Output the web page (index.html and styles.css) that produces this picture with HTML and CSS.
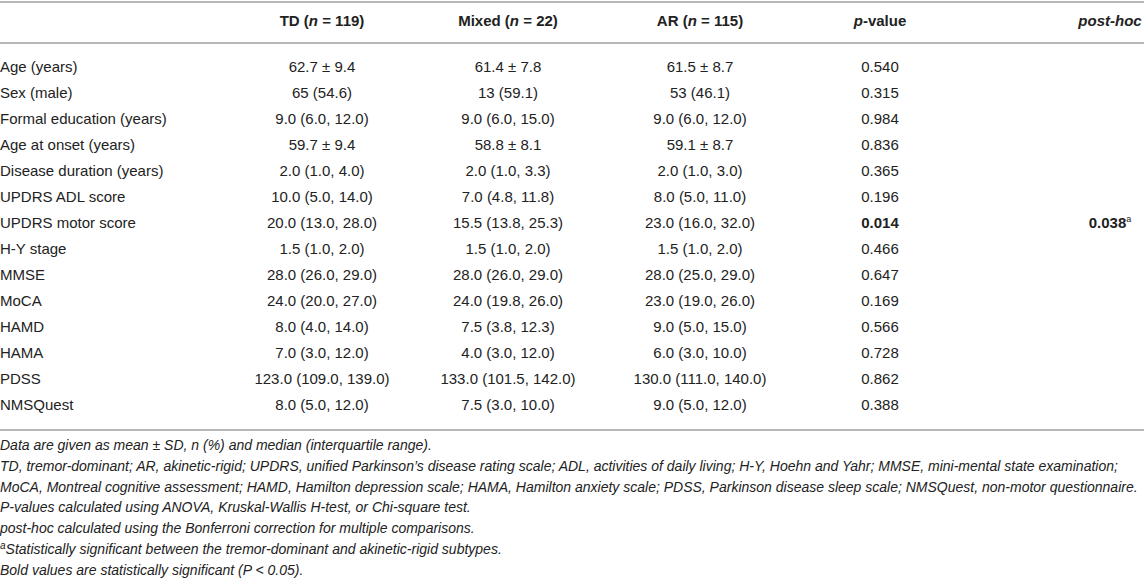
FILE: index.html
```html
<!DOCTYPE html>
<html>
<head>
<meta charset="utf-8">
<link rel="stylesheet" href="styles.css">
</head>
<body>
<div class="page">
  <div class="table">
    <div class="row head">
      <div class="c lab"></div>
      <div class="c">TD (<i>n</i> = 119)</div>
      <div class="c">Mixed (<i>n</i> = 22)</div>
      <div class="c">AR (<i>n</i> = 115)</div>
      <div class="c"><i>p</i>-value</div>
      <div class="c last"><i>post-hoc</i></div>
    </div>
    <div class="body">
      <div class="row"><div class="c lab">Age (years)</div><div class="c">62.7 ± 9.4</div><div class="c">61.4 ± 7.8</div><div class="c">61.5 ± 8.7</div><div class="c">0.540</div><div class="c last"></div></div>
      <div class="row"><div class="c lab">Sex (male)</div><div class="c">65 (54.6)</div><div class="c">13 (59.1)</div><div class="c">53 (46.1)</div><div class="c">0.315</div><div class="c last"></div></div>
      <div class="row"><div class="c lab">Formal education (years)</div><div class="c">9.0 (6.0, 12.0)</div><div class="c">9.0 (6.0, 15.0)</div><div class="c">9.0 (6.0, 12.0)</div><div class="c">0.984</div><div class="c last"></div></div>
      <div class="row"><div class="c lab">Age at onset (years)</div><div class="c">59.7 ± 9.4</div><div class="c">58.8 ± 8.1</div><div class="c">59.1 ± 8.7</div><div class="c">0.836</div><div class="c last"></div></div>
      <div class="row"><div class="c lab">Disease duration (years)</div><div class="c">2.0 (1.0, 4.0)</div><div class="c">2.0 (1.0, 3.3)</div><div class="c">2.0 (1.0, 3.0)</div><div class="c">0.365</div><div class="c last"></div></div>
      <div class="row"><div class="c lab">UPDRS ADL score</div><div class="c">10.0 (5.0, 14.0)</div><div class="c">7.0 (4.8, 11.8)</div><div class="c">8.0 (5.0, 11.0)</div><div class="c">0.196</div><div class="c last"></div></div>
      <div class="row"><div class="c lab">UPDRS motor score</div><div class="c">20.0 (13.0, 28.0)</div><div class="c">15.5 (13.8, 25.3)</div><div class="c">23.0 (16.0, 32.0)</div><div class="c"><b>0.014</b></div><div class="c last"><b>0.038</b><sup>a</sup></div></div>
      <div class="row"><div class="c lab">H-Y stage</div><div class="c">1.5 (1.0, 2.0)</div><div class="c">1.5 (1.0, 2.0)</div><div class="c">1.5 (1.0, 2.0)</div><div class="c">0.466</div><div class="c last"></div></div>
      <div class="row"><div class="c lab">MMSE</div><div class="c">28.0 (26.0, 29.0)</div><div class="c">28.0 (26.0, 29.0)</div><div class="c">28.0 (25.0, 29.0)</div><div class="c">0.647</div><div class="c last"></div></div>
      <div class="row"><div class="c lab">MoCA</div><div class="c">24.0 (20.0, 27.0)</div><div class="c">24.0 (19.8, 26.0)</div><div class="c">23.0 (19.0, 26.0)</div><div class="c">0.169</div><div class="c last"></div></div>
      <div class="row"><div class="c lab">HAMD</div><div class="c">8.0 (4.0, 14.0)</div><div class="c">7.5 (3.8, 12.3)</div><div class="c">9.0 (5.0, 15.0)</div><div class="c">0.566</div><div class="c last"></div></div>
      <div class="row"><div class="c lab">HAMA</div><div class="c">7.0 (3.0, 12.0)</div><div class="c">4.0 (3.0, 12.0)</div><div class="c">6.0 (3.0, 10.0)</div><div class="c">0.728</div><div class="c last"></div></div>
      <div class="row"><div class="c lab">PDSS</div><div class="c">123.0 (109.0, 139.0)</div><div class="c">133.0 (101.5, 142.0)</div><div class="c">130.0 (111.0, 140.0)</div><div class="c">0.862</div><div class="c last"></div></div>
      <div class="row"><div class="c lab">NMSQuest</div><div class="c">8.0 (5.0, 12.0)</div><div class="c">7.5 (3.0, 10.0)</div><div class="c">9.0 (5.0, 12.0)</div><div class="c">0.388</div><div class="c last"></div></div>
    </div>
  </div>
  <div class="notes">
    <p>Data are given as mean ± SD, n (%) and median (interquartile range).</p>
    <p>TD, tremor-dominant; AR, akinetic-rigid; UPDRS, unified Parkinson’s disease rating scale; ADL, activities of daily living; H-Y, Hoehn and Yahr; MMSE, mini-mental state examination;</p>
    <p>MoCA, Montreal cognitive assessment; HAMD, Hamilton depression scale; HAMA, Hamilton anxiety scale; PDSS, Parkinson disease sleep scale; NMSQuest, non-motor questionnaire.</p>
    <p>P-values calculated using ANOVA, Kruskal-Wallis H-test, or Chi-square test.</p>
    <p>post-hoc calculated using the Bonferroni correction for multiple comparisons.</p>
    <p><sup>a</sup>Statistically significant between the tremor-dominant and akinetic-rigid subtypes.</p>
    <p>Bold values are statistically significant (P &lt; 0.05).</p>
  </div>
</div>
</body>
</html>
```
FILE: styles.css
```css
html, body {
  margin: 0;
  padding: 0;
  background: #ffffff;
}
body {
  font-family: "Liberation Sans", Arial, Helvetica, sans-serif;
  color: #222222;
  width: 1144px;
  overflow: hidden;
}
.page {
  padding-top: 1px;
}
.table {
  border-top: 2px solid #b8b8b8;
  border-bottom: 2px solid #b8b8b8;
}
.row {
  display: grid;
  grid-template-columns: 230px 184px 188px 196px 164px 1fr;
  font-size: 15px;
  line-height: 18px;
  height: 26px;
  align-items: center;
  white-space: nowrap;
}
.row.head {
  height: 41px;
  font-weight: bold;
  border-bottom: 2px solid #b8b8b8;
  align-items: start;
  padding-top: 9px;
  box-sizing: border-box;
}
.body {
  padding-top: 10px;
  padding-bottom: 11px;
}
.c {
  text-align: center;
}
.c.lab {
  text-align: left;
}
.c.last {
  padding-left: 114px;
}
sup {
  font-size: 9px;
  line-height: 0;
  vertical-align: 6px;
  font-weight: normal;
}
.notes {
  padding-top: 4px;
  font-size: 14px;
  font-style: italic;
  line-height: 20.8px;
  white-space: nowrap;
}
.notes p {
  margin: 0;
}
.notes sup {
  font-size: 10px;
  vertical-align: 5px;
}
```
